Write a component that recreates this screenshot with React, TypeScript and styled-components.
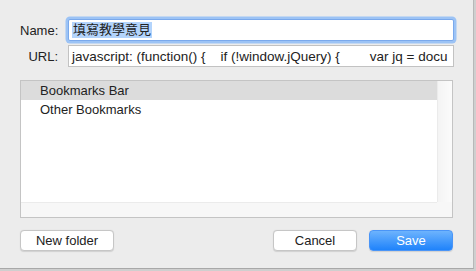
import React from 'react';
import styled, { createGlobalStyle } from 'styled-components';

const GlobalStyle = createGlobalStyle`
  html, body {
    margin: 0;
    padding: 0;
    background: #cfcfcf;
  }
  body {
    font-family: 'Liberation Sans', 'Noto Sans CJK TC', sans-serif;
    font-size: 13px;
    color: #222;
  }
`;

interface IFolder {
  id: string;
  title: string;
}

const folders: Array<IFolder> = [
  { id: 'bar', title: 'Bookmarks Bar' },
  { id: 'other', title: 'Other Bookmarks' },
];

const App: React.FC = () => {
  const selectedId = 'bar';
  return (
    <>
      <GlobalStyle />
      <Dialog>
        <FieldGrid>
          <Label>Name:</Label>
          <TextField $focused>
            <Selected>填寫教學意見</Selected>
          </TextField>
          <Label>URL:</Label>
          <TextField>
            {'javascript: (function() {    if (!window.jQuery) {        var jq = docu'}
          </TextField>
        </FieldGrid>
        <ScrollView>
          <ListContent>
            {folders.map(f => (
              <FolderRow key={f.id} $selected={f.id === selectedId}>
                {f.title}
              </FolderRow>
            ))}
          </ListContent>
          <VTrack />
          <HTrack />
          <Corner />
        </ScrollView>
        <Footer>
          <Button $width={94}>New folder</Button>
          <Spacer />
          <Button $width={84}>Cancel</Button>
          <Button $width={84} $primary>
            Save
          </Button>
        </Footer>
      </Dialog>
    </>
  );
};

export default App;

const Dialog = styled.div`
  box-sizing: border-box;
  width: 474px;
  height: 269px;
  background: #ececec;
  border-right: 1px solid #b8b8b8;
  border-bottom: 1px solid #a8a8a8;
  padding: 19px 20px 0;
  display: flex;
  flex-direction: column;
`;

const FieldGrid = styled.div`
  display: grid;
  grid-template-columns: 38px 1fr;
  column-gap: 10px;
  row-gap: 4px;
  margin-right: -1px;
  align-items: center;
`;

const Label = styled.div`
  text-align: right;
  font-size: 13px;
  color: #222;
  white-space: nowrap;
`;

const TextField = styled.div<{ $focused?: boolean }>`
  box-sizing: border-box;
  height: 22px;
  background: #fff;
  border: 1px solid ${p => (p.$focused ? '#7aa9ec' : '#c2c2c2')};
  box-shadow: ${p => (p.$focused ? '0 0 0 2.5px #9cc3f5' : 'none')};
  border-radius: ${p => (p.$focused ? '2px' : '0')};
  padding: 0 3px;
  display: flex;
  align-items: center;
  font-size: 13.5px;
  color: #222;
  white-space: pre;
  overflow: hidden;
`;

const Selected = styled.span`
  background: #b3d4fc;
  font-size: 13px;
  line-height: 16px;
  padding: 0 1px;
`;

const ScrollView = styled.div`
  margin-top: 13px;
  height: 138px;
  box-sizing: border-box;
  border: 1px solid #c4c4c4;
  display: grid;
  grid-template-columns: 1fr 15px;
  grid-template-rows: 1fr 15px;
  background: #fff;
`;

const ListContent = styled.div`
  background: #fff;
  display: flex;
  flex-direction: column;
`;

const FolderRow = styled.div<{ $selected?: boolean }>`
  height: 19px;
  line-height: 19px;
  padding-left: 19px;
  font-size: 13px;
  color: #222;
  background: ${p => (p.$selected ? '#dcdcdc' : 'transparent')};
`;

const VTrack = styled.div`
  background: linear-gradient(to right, #f4f4f4, #fbfbfb);
  border-left: 1px solid #ebebeb;
`;

const HTrack = styled.div`
  background: #f7f7f7;
  border-top: 1px solid #ebebeb;
`;

const Corner = styled.div`
  background: #f7f7f7;
`;

const Footer = styled.div`
  margin-top: 12px;
  display: flex;
  align-items: center;
  gap: 12px;
`;

const Spacer = styled.div`
  flex: 1;
`;

const Button = styled.button<{ $width: number; $primary?: boolean }>`
  box-sizing: border-box;
  width: ${p => p.$width}px;
  height: 21px;
  padding: 0;
  font-family: 'Liberation Sans', sans-serif;
  font-size: 13px;
  border-radius: 4px;
  color: ${p => (p.$primary ? '#fff' : '#222')};
  border: 1px solid ${p => (p.$primary ? '#4a95f7' : '#c6c6c6')};
  background: ${p => (p.$primary ? 'linear-gradient(#6db3fd, #1f83fb)' : '#fff')};
  box-shadow: 0 0.5px 1px rgba(0, 0, 0, 0.12);
`;
